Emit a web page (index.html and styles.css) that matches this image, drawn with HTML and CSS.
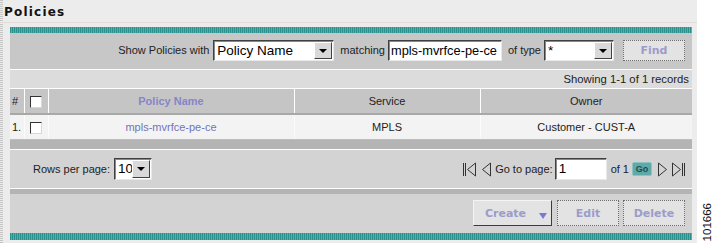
FILE: index.html
```html
<!DOCTYPE html>
<html lang="en">
<head>
    <meta charset="UTF-8">
    <meta name="viewport" content="width=device-width, initial-scale=1.0">
    <title>Policies</title>
    <link rel="stylesheet" href="styles.css">
</head>
<body>
    <div class="page">
        <div class="titlebar"><h1>Policies</h1></div>

        <div class="panel">
            <div class="teal"></div>

            <!-- search filter -->
            <div class="search">
                <span class="label">Show Policies with</span>
                <div class="select sel-field">
                    <span class="value">Policy Name</span>
                    <span class="drop"><i class="tri"></i></span>
                </div>
                <span class="label gap-l">matching</span>
                <div class="input inp-match"><span class="value">mpls-mvrfce-pe-ce</span></div>
                <span class="label gap-l">of type</span>
                <div class="select sel-type">
                    <span class="value">*</span>
                    <span class="drop"><i class="tri"></i></span>
                </div>
                <button class="btn dotted btn-find" type="button">Find</button>
            </div>

            <div class="count">Showing 1-1 of 1 records</div>

            <table class="grid">
                <colgroup>
                    <col class="c-num">
                    <col class="c-check">
                    <col class="c-name">
                    <col class="c-service">
                    <col class="c-owner">
                </colgroup>
                <thead>
                    <tr>
                        <th class="num">#</th>
                        <th><span class="check"></span></th>
                        <th class="sortable">Policy Name</th>
                        <th>Service</th>
                        <th>Owner</th>
                    </tr>
                </thead>
                <tbody>
                    <tr>
                        <td class="num">1.</td>
                        <td><span class="check"></span></td>
                        <td class="link">mpls-mvrfce-pe-ce</td>
                        <td>MPLS</td>
                        <td>Customer - CUST-A</td>
                    </tr>
                </tbody>
            </table>

            <div class="bar"></div>

            <!-- paging -->
            <div class="pager">
                <span class="label">Rows per page:</span>
                <div class="select sel-rows">
                    <span class="value">10</span>
                    <span class="drop"><i class="tri"></i></span>
                </div>
                <div class="nav">
                    <svg class="icon first" width="14" height="15" viewBox="0 0 14 15"><path d="M0.5 1v13M2.5 1v13M12.5 1L4.5 7.5l8 6.5z"/></svg>
                    <svg class="icon prev" width="10" height="15" viewBox="0 0 10 15"><path d="M8.5 1L0.5 7.5l8 6.5z"/></svg>
                    <span class="label">Go to page:</span>
                    <div class="input inp-page"><span class="value">1</span></div>
                    <span class="label">of 1</span>
                    <span class="go">Go</span>
                    <svg class="icon next" width="10" height="15" viewBox="0 0 10 15"><path d="M0.5 1l8 6.5-8 6.5z"/></svg>
                    <svg class="icon last" width="14" height="15" viewBox="0 0 14 15"><path d="M0.5 1l8 6.5-8 6.5zM10.5 1v13M12.5 1v13"/></svg>
                </div>
            </div>

            <div class="bar thin"></div>

            <div class="actions">
                <button class="btn raised btn-create" type="button">Create<i class="menu-tri"></i></button>
                <button class="btn dotted btn-edit" type="button">Edit</button>
                <button class="btn dotted btn-delete" type="button">Delete</button>
            </div>

            <div class="teal bottom"></div>
        </div>
    </div>

    <div class="side"><span class="fig">101666</span></div>
</body>
</html>
```

FILE: styles.css
```css
body {
    margin: 0;
    width: 715px;
    height: 243px;
    overflow: hidden;
    display: flex;
    background: #fff;
    font-family: "Liberation Sans", Arial, sans-serif;
    font-size: 11px;
    color: #222;
}
.page {
    width: 697px;
    height: 243px;
    background: #ececec;
    background-image: repeating-linear-gradient(180deg, #c4c4c4 0 1px, #ececec 1px 2px);
    background-size: 3px 100%;
    background-repeat: no-repeat;
}
.titlebar {
    height: 22px;
    border-bottom: 1px solid #e2d9d9;
}
h1 {
    margin: 0;
    padding: 5px 0 0 4px;
    font-family: "DejaVu Sans", Verdana, sans-serif;
    font-size: 12px;
    line-height: 14px;
    letter-spacing: 1.2px;
    color: #111;
}
.panel {
    width: 682px;
    margin: 4px 0 0 10px;
}
.teal {
    height: 6px;
    background: repeating-linear-gradient(90deg, #2b8f8c 0 1px, #55b0ab 1px 2px);
}
.teal.bottom {
    height: 7px;
}

/* search row */
.search {
    height: 36px;
    box-sizing: border-box;
    padding: 7px 7px 0 0;
    background: #c7c7c7;
    display: flex;
    justify-content: flex-end;
    align-items: flex-start;
}
.label {
    line-height: 21px;
    white-space: nowrap;
}
.gap-l {
    margin-left: 6px;
}
.select, .input {
    height: 21px;
    box-sizing: border-box;
    background: #fff;
    border: 1px solid;
    border-color: #404040 #e8e8e8 #e8e8e8 #404040;
    box-shadow: inset 1px 1px 0 #888;
    display: flex;
    overflow: hidden;
}
.value {
    flex: 1;
    font-size: 13.5px;
    line-height: 19px;
    padding-left: 3px;
    color: #000;
    white-space: nowrap;
    overflow: hidden;
}
.drop {
    width: 16px;
    margin: 1px 1px 1px 0;
    background: #d9d9d9;
    border: 1px solid;
    border-color: #fff #404040 #404040 #fff;
    display: flex;
    align-items: center;
    justify-content: center;
}
.tri {
    width: 0;
    height: 0;
    border-left: 4px solid transparent;
    border-right: 4px solid transparent;
    border-top: 4px solid #000;
}
.sel-field {
    width: 121px;
    margin-left: 4px;
}
.inp-match {
    width: 114px;
    margin-left: 3px;
}
.inp-match .value {
    font-size: 12.8px;
    padding-left: 2px;
}
.sel-type {
    width: 70px;
    margin-left: 3px;
}
.btn {
    height: 21px;
    box-sizing: border-box;
    padding: 0;
    background: #e3e3e3;
    font-family: "DejaVu Sans", Verdana, sans-serif;
    font-size: 11px;
    font-weight: bold;
    color: #9c9ccb;
}
.dotted {
    border: 1px dotted #6d6d6d;
}
.raised {
    border: 1px solid;
    border-color: #f4f4f4 #3c3c3c #3c3c3c #f4f4f4;
}
.btn-find {
    width: 62px;
    margin-left: 9px;
}

/* records */
.count {
    height: 19px;
    box-sizing: border-box;
    border-top: 1px solid #fff;
    background: #dcdcdc;
    text-align: right;
    padding-right: 3px;
    line-height: 18px;
    font-size: 11.3px;
}
.grid {
    width: 682px;
    border-collapse: collapse;
    table-layout: fixed;
}
.c-num { width: 14px; }
.c-check { width: 24px; }
.c-name { width: 246px; }
.c-service { width: 186px; }
.grid th, .grid td {
    padding: 0;
    text-align: center;
    border-left: 1px solid #fff;
    white-space: nowrap;
}
.grid th:first-child, .grid td:first-child {
    border-left: none;
}
.grid th {
    height: 24px;
    background: #c5c5c5;
    border-top: 1px solid #fff;
    border-bottom: 2px solid #a8a8a8;
    font-weight: normal;
}
.grid td {
    height: 24px;
    background: #f3f3f3;
    border-left-color: #fbfbfb;
}
.grid .num {
    text-align: left;
    padding-left: 2px;
}
.grid .sortable {
    font-weight: bold;
    color: #8585c9;
}
.grid .link {
    color: #7373b6;
}
.check {
    display: inline-block;
    width: 12px;
    height: 12px;
    box-sizing: border-box;
    vertical-align: middle;
    background: #fff;
    border: 1px solid;
    border-color: #333 #d8d8d8 #d8d8d8 #333;
}
.bar {
    height: 9px;
    background: #b4b4b4;
    border-top: 1px solid #bdbdbd;
    border-bottom: 1px solid #fff;
}
.bar.thin {
    height: 5px;
    border-top: 1px solid #fff;
    border-bottom: none;
}

/* paging */
.pager {
    height: 38px;
    background: #d3d3d3;
    display: flex;
    align-items: center;
    padding: 0 6px 0 23px;
}
.sel-rows {
    width: 38px;
    height: 22px;
    margin-left: 4px;
}
.nav {
    margin-left: auto;
    display: flex;
    align-items: center;
}
.icon {
    fill: none;
    stroke: #333;
    stroke-width: 1;
}
.first { margin-right: 5px; }
.prev { margin-right: 3px; }
.next { margin-left: 6px; }
.last { margin-left: 4px; }
.inp-page {
    width: 52px;
    height: 22px;
    margin: 0 4px 0 2px;
}
.go {
    width: 18px;
    height: 12px;
    margin-left: 3px;
    border-radius: 2px;
    background: #5fa9a9;
    border: 1px solid #8cc4c4;
    font-size: 9px;
    font-weight: bold;
    line-height: 12px;
    text-align: center;
    color: #1d4d4d;
}

/* actions */
.actions {
    height: 39px;
    box-sizing: border-box;
    padding: 6px 7px 0 0;
    background: #d3d3d3;
    display: flex;
    justify-content: flex-end;
    align-items: flex-start;
}
.actions .btn {
    height: 26px;
}
.btn-create {
    width: 79px;
    position: relative;
    padding-right: 14px;
}
.menu-tri {
    position: absolute;
    right: 4px;
    top: 12px;
    width: 0;
    height: 0;
    border-left: 4px solid transparent;
    border-right: 4px solid transparent;
    border-top: 6px solid #7a7ad0;
}
.btn-edit {
    width: 62px;
    margin-left: 5px;
}
.btn-delete {
    width: 62px;
    margin-left: 4px;
}

/* figure number */
.side {
    flex: 1;
    position: relative;
}
.fig {
    position: absolute;
    left: 4px;
    bottom: 2px;
    writing-mode: vertical-rl;
    transform: rotate(180deg);
    font-size: 11.5px;
    color: #111;
}
```
